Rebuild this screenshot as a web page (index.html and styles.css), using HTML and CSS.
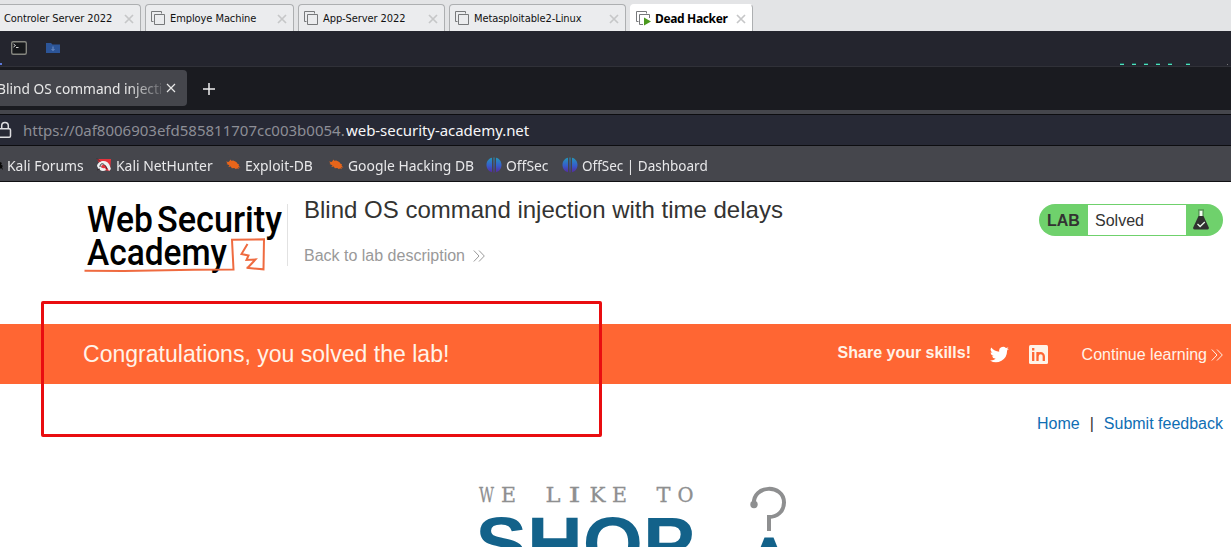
FILE: index.html
```html
<!DOCTYPE html>
<html lang="en">
<head>
<meta charset="utf-8">
<title>Blind OS command injection with time delays</title>
<link rel="stylesheet" href="styles.css">
</head>
<body>
<svg class="defs" width="0" height="0">
  <defs>
    <symbol id="vm" viewBox="0 0 15 15"><path d="M2.500 10.500H.5V.5h10v2M3.500 3.500h10v10h-10z" fill="none" stroke="#77797b"/></symbol>
    <symbol id="x" viewBox="0 0 10 10"><path d="M1 1l8 8M9 1L1 9" fill="none" stroke="currentColor" stroke-width="1.700"/></symbol>
    <symbol id="thinx" viewBox="0 0 10 10"><path d="M1 1l8 8M9 1L1 9" fill="none" stroke="currentColor" stroke-width="1.200"/></symbol>
    <symbol id="bug" viewBox="0 0 16 16"><path d="M1 4.500L3.500 5l1-1 1-1.500.8 1.200 2-.2 3 1.500 1.500 2 1.200.2-.4 1.300 1.800 2.200-2.200-.6.6 2.100-1.800-1-1 1-1.700-1.200-2.500.2-1-1.700-2.500.5 1.200-1.700L1.500 7l1-.8z" fill="#e8651a"/></symbol>
    <symbol id="offsec" viewBox="0 0 16 16"><path d="M6 .8v14.400C2.500 14.500.5 11.500.5 7.800S3 1.500 6 .8zM10 .8v14.400c3.500-.7 5.500-3.700 5.500-7.400S13 1.500 10 .8zM7.500.5h1v15h-1z" fill="url(#og)"/></symbol>
    <linearGradient id="og" x1="0" y1="0" x2="0" y2="1"><stop offset="0" stop-color="#2497b8"/><stop offset=".55" stop-color="#365ccc"/><stop offset="1" stop-color="#562a9c"/></linearGradient>
    <symbol id="chev" viewBox="0 0 12 12"><path d="M.8.5L6 6 .8 11.500M6 .5L11.300 6 6 11.500" fill="none" stroke="currentColor"/></symbol>
  </defs>
</svg>

<div class="vmtabs">
  <div class="vmtab first"><span>Controler Server 2022</span><svg class="close"><use href="#x"/></svg></div>
  <div class="vmtab t2"><svg class="vm"><use href="#vm"/></svg><span>Employe Machine</span><svg class="close"><use href="#x"/></svg></div>
  <div class="vmtab t3"><svg class="vm"><use href="#vm"/></svg><span>App-Server 2022</span><svg class="close"><use href="#x"/></svg></div>
  <div class="vmtab t4"><svg class="vm"><use href="#vm"/></svg><span>Metasploitable2-Linux</span><svg class="close"><use href="#x"/></svg></div>
  <div class="vmtab active"><svg class="vm" viewBox="0 0 15 15"><path d="M2.500 10.500H.5V.5h10v2M7 13.500H3.500v-10h10V7" fill="none" stroke="#77797b"/><path d="M8 6.500l7 4-7 4z" fill="#4b9a1e"/></svg><span>Dead Hacker</span><svg class="close"><use href="#x"/></svg></div>
</div>

<div class="panel">
  <svg width="66" height="35" viewBox="0 0 66 35">
    <path d="M0 33h2" stroke="#5c78d8" stroke-width="2"/>
    <rect x="11.700" y="10.700" width="14.600" height="12.600" rx="1.500" fill="#17191c" stroke="#85867f" stroke-width="1.400"/>
    <path d="M13.500 13l2 1.500-2 1.500M16 16.500h2.500" stroke="#d5d5d5" fill="none"/>
    <path d="M46 12h5l1.500 1.500H60V22H46z" fill="#2c5598"/><path d="M53 15.500v4M51.500 18l1.500 1.500 1.500-1.500" stroke="#6f8fc6" fill="none"/>
  </svg>
  <svg class="graph" width="111" height="5" viewBox="0 0 111 5"><path d="M0 3h4m8 0h4m8 0h4m8 0h4m8 0h4m14 0h4" stroke="#1e665c" stroke-width="2"/><path d="M0 3.500h4m8 0h4m8 0h4m8 0h4m8 0h4m14 0h4" stroke="#4fe0bc"/><path d="M107 3.500h1" stroke="#777"/></svg>
</div>

<div class="tabstrip">
  <div class="btab"><div class="fade"><span>Blind OS command injecti</span></div><svg width="10" height="10"><use href="#thinx"/></svg></div>
  <svg class="plus" width="12" height="12" viewBox="0 0 12 12"><path d="M6 0v12M0 6h12" stroke="#eee" stroke-width="1.500"/></svg>
</div>

<div class="urlbar">
  <svg width="12" height="18" viewBox="0 0 12 18"><rect x="-1" y="7.800" width="11.500" height="8.500" rx="1.200" fill="none" stroke="#dddde0" stroke-width="1.500"/><path d="M1.700 8V4.800a3.300 3.300 0 0 1 6.600 0V8" fill="none" stroke="#dddde0" stroke-width="1.500"/></svg>
  <span class="sub">https://0af8006903efd585811707cc003b0054.</span><span class="host">web-security-academy.net</span>
</div>

<div class="bookmarks">
  <div class="bm b1"><svg width="3" height="16" viewBox="0 0 3 16"><path d="M0 5l2 1-1 1.500 2 1.500-1 1 1 3-2-2-1 1z" fill="#090909"/></svg><span>Kali Forums</span></div>
  <div class="bm b2"><svg width="16" height="16" viewBox="0 0 16 16"><path d="M1 2h14l-1 12-7-1z" fill="#e5323c"/><path d="M1 9c1-5 7-6 10-4 3 2 3 5 4 7l-2 2C11 10 9 7 6.500 8S5 12 9 11l1 2c-3 2-7 1-9-4z" fill="#eef0f1"/><path d="M1 1.500l3 3M4 10c0-5 5-4 7 2M1 13l3-1" fill="none" stroke="#34252b"/></svg><span>Kali NetHunter</span></div>
  <div class="bm b3"><svg width="16" height="16"><use href="#bug"/></svg><span>Exploit-DB</span></div>
  <div class="bm b4"><svg width="16" height="16"><use href="#bug"/></svg><span>Google Hacking DB</span></div>
  <div class="bm b5"><svg width="16" height="16"><use href="#offsec"/></svg><span>OffSec</span></div>
  <div class="bm b6"><svg width="16" height="16"><use href="#offsec"/></svg><span>OffSec | Dashboard</span></div>
</div>

<main class="page">
  <header class="labhead">
    <svg class="logo" width="204" height="80" viewBox="0 0 204 80">
      <g class="logotext"><text x="3" y="38" textLength="66" lengthAdjust="spacingAndGlyphs">Web</text><text x="73" y="38" textLength="125" lengthAdjust="spacingAndGlyphs">Security</text><text x="3" y="70.500" textLength="140" lengthAdjust="spacingAndGlyphs">Academy</text></g>
      <path d="M.5 76.800L40 77l70-1.200 39.500-.3-1.500-29.700 32-.5-.5 30-17-1.500" fill="none" stroke="#ef6b40" stroke-width="2"/>
      <path d="M163.500 50l-6 10 7 1.500-2 4.500 9-.5-8 8.500" fill="none" stroke="#ef6b40" stroke-width="2"/>
    </svg>
    <div class="titles">
      <h1>Blind OS command injection with time delays</h1>
      <a class="back"><span>Back to lab description</span><svg width="12" height="12"><use href="#chev"/></svg></a>
    </div>
    <div class="badge"><b>LAB</b><span>Solved</span>
      <svg width="18" height="22" viewBox="0 0 18 22"><path d="M6 1h6M7 1.500v6h4v-6" fill="#f2fff2" stroke="#457a43"/><path d="M6.500 7h5l5.300 11.500q.5 2-1.300 2h-13q-1.800 0-1.300-2z" fill="#303130"/><path d="M5.500 15l2.600 2.500 4.700-4.500" fill="none" stroke="#eafaea" stroke-width="1.300"/></svg>
    </div>
  </header>

  <section class="banner">
    <p>Congratulations, you solved the lab!</p>
    <b>Share your skills!</b>
    <svg class="tw" width="19" height="19" viewBox="0 0 24 24"><path fill="#fff" d="M23.900 4.600a10 10 0 0 1-2.800.8 4.900 4.900 0 0 0 2.100-2.700 10 10 0 0 1-3.100 1.200 4.900 4.900 0 0 0-8.400 4.500A14 14 0 0 1 1.600 3.200a4.900 4.900 0 0 0 1.500 6.500 4.900 4.900 0 0 1-2.200-.6v.1a4.900 4.900 0 0 0 3.900 4.800 5 5 0 0 1-2.200.1 4.900 4.900 0 0 0 4.600 3.400A9.900 9.900 0 0 1 0 19.500 14 14 0 0 0 21.500 7.100a10 10 0 0 0 2.400-2.500z"/></svg>
    <svg class="li" width="19" height="19" viewBox="0 0 19 19"><rect width="19" height="19" rx="1.500" fill="#fff3e8"/><path d="M4.200 7v9M4.200 3v2.500M8.500 16V7M8.500 11.500c0-4.500 6.300-4.500 6.300 0V16" fill="none" stroke="#f63" stroke-width="2.300"/></svg>
    <a><span>Continue learning</span><svg width="12" height="12"><use href="#chev"/></svg></a>
  </section>

  <nav class="links"><a class="home">Home</a><i>|</i><a class="fb">Submit feedback</a></nav>

  <svg class="shop" width="330" height="68" viewBox="0 0 330 68">
    <g class="like">
      <text x="9" y="23" textLength="15" lengthAdjust="spacingAndGlyphs">W</text>
      <text x="31" y="23" textLength="15" lengthAdjust="spacingAndGlyphs">E</text>
      <text x="75.500" y="23" textLength="15" lengthAdjust="spacingAndGlyphs">L</text>
      <text x="98.500" y="23" textLength="12" lengthAdjust="spacingAndGlyphs">I</text>
      <text x="119.500" y="23" textLength="16" lengthAdjust="spacingAndGlyphs">K</text>
      <text x="142" y="23" textLength="15" lengthAdjust="spacingAndGlyphs">E</text>
      <text x="186.500" y="23" textLength="14" lengthAdjust="spacingAndGlyphs">T</text>
      <text x="207.500" y="23" textLength="16" lengthAdjust="spacingAndGlyphs">O</text>
    </g>
    <text class="big" x="5.500" y="90" textLength="219" lengthAdjust="spacingAndGlyphs">SHOP</text>
    <path d="M284 25.500c-2-20 30-21 30-2 0 9-7 14.500-15 14.500v14" fill="none" stroke="#8e8f90" stroke-width="4"/><circle cx="284" cy="25.500" r="3.700" fill="#8e8f90"/>
    <path d="M294.500 58.500h9l4 10h-17z" fill="#13628a"/>
  </svg>
</main>
<div class="marker"></div>
</body>
</html>
```
FILE: styles.css
```css
* { box-sizing: border-box; }
body { margin: 0; width: 1231px; height: 547px; overflow: hidden; position: relative; background: #fff; font-family: "Liberation Sans", Arial, sans-serif; }
.defs { position: absolute; }
svg { flex: none; display: block; }
span, h1, p, b, a { white-space: nowrap; }

.vmtabs { height: 31px; padding-top: 4px; display: flex; gap: 4px; background: #e3e4e6; }
.vmtab { height: 27px; display: flex; align-items: center; border: 1px solid #adafb1; border-bottom: 0; border-radius: 4px 4px 0 0; background: #ebecee; padding: 1px 6px 0 5px; font: 11px/25px "DejaVu Sans Condensed", "DejaVu Sans", sans-serif; font-stretch: condensed; color: #111; letter-spacing: -.08px; }
.vmtab.first { width: 141px; padding-left: 4px; border-left: 0; border-radius: 0 4px 0 0; }
.t2 { width: 149px; }
.t3 { width: 147px; }
.t4 { width: 177px; }
.vmtab.active { width: 123px; background: #fff; border-left-color: #fff; border-top-color: #fff; font: bold 12px/25px "Noto Sans", sans-serif; letter-spacing: -.35px; color: #000; }
.vm { width: 15px; height: 15px; margin-right: 4px; }
.close { width: 10px; height: 10px; margin-left: auto; color: #c6c7c8; }

.panel { height: 36px; background: #24252e; border-bottom: 1px solid #303138; display: flex; justify-content: space-between; }
.graph { margin-top: 30px; }

.tabstrip { height: 43px; background: #1a1b20; display: flex; align-items: center; }
.btab { width: 187px; height: 36px; margin-top: -1px; display: flex; align-items: center; background: #45464c; border-radius: 0 4px 4px 0; color: #e8e8e8; overflow: hidden; font: 15px/36px "Noto Sans", sans-serif; }
.fade { width: 164px; margin-left: -3px; -webkit-mask-image: linear-gradient(90deg, #000 80%, rgba(0,0,0,.2)); mask-image: linear-gradient(90deg, #000 80%, rgba(0,0,0,.2)); }
.fade span { display: block; transform: scaleX(.915); transform-origin: 0 50%; }
.btab svg { margin-left: 5px; }
.plus { margin-left: 16px; }

.urlbar { height: 36px; background: #272935; border-top: 4px solid #45464c; border-bottom: 1px solid #0d0d10; box-shadow: inset 0 1px #0d0d10; display: flex; align-items: center; font: 15px/30px "Noto Sans", sans-serif; }
.sub { width: 323px; margin-left: 11px; color: #8d8e96; }
.host { color: #f6f6f8; letter-spacing: -.05px; }

.bookmarks { height: 36px; background: #45464c; border-bottom: 1px solid #101013; display: flex; align-items: center; color: #e8e8ea; font: 15px/34px "Noto Sans", sans-serif; }
.bm { display: flex; align-items: center; gap: 4px; margin-top: 2px; flex: none; }
.bm span { transform: scaleX(.926); transform-origin: 0 50%; }
.b1 { width: 96px; } .b2 { width: 129px; } .b3 { width: 103px; } .b4 { width: 158px; } .b5 { width: 76px; }
.b6 span { transform: scaleX(.9); }

.labhead { height: 142px; display: flex; align-items: flex-start; padding: 12px 8px 0 84px; }
.logotext { font: 500 37px Roboto, sans-serif; }
.titles { border-left: 1px solid #e2e2e2; height: 62px; margin-top: 10px; padding-left: 16px; margin-left: -1px; }
h1 { margin: -9px 0 0; font-weight: 400; font-size: 24px; line-height: 29px; color: #333332; }
.back { display: flex; align-items: center; gap: 8px; margin-top: 22px; color: #999; font-size: 16px; line-height: 20px; }
.badge { width: 184px; height: 32px; margin: 10px 0 0 auto; border-radius: 16px; background: #6fd16c; display: flex; align-items: center; color: #333332; }
.badge b { width: 49px; padding-left: 8px; line-height: 36px; padding-top: 2px; font-size: 16px; }
.badge span { width: 98px; height: 30px; padding-left: 7px; line-height: 32px; font-size: 16px; background: #fff; }
.badge svg { margin-left: 6px; }

.banner { height: 60px; background: #f63; color: #fff3e8; display: flex; align-items: center; padding: 0 8px 0 83px; }
.banner p { margin: 0 auto 0 0; font-size: 23px; letter-spacing: .02px; }
.banner b { font-size: 16px; width: 134px; margin: -2px 18px 0 0; }
.li { margin: 1px 34px 0 20px; }
.banner a { display: flex; align-items: center; gap: 4px; font-size: 16px; padding-top: 1px; }
.links { display: flex; justify-content: flex-end; padding: 30px 8px 0 0; font-size: 16px; line-height: 20px; color: #0f6eb4; }
.links i { font-style: normal; color: #333; margin: 0 10px; }
.shop { margin: 45px 0 0 470px; }
.like { font: 20.500px "DejaVu Serif", serif; fill: #8e8f90; stroke: #8e8f90; stroke-width: .3; }
.big { font: bold 75px "Liberation Sans", sans-serif; fill: #13628a; }

/* highlight frame drawn over the page */
.marker { position: absolute; left: 41px; top: 301px; width: 561px; height: 136px; border: 3px solid #e90d10; border-radius: 2px; }
```
